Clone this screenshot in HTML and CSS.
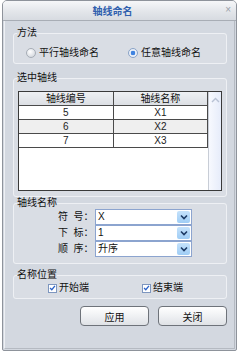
FILE: index.html
```html
<!DOCTYPE html>
<html lang="zh">
<head>
    <meta charset="UTF-8">
    <title>轴线命名</title>
    <link rel="stylesheet" href="styles.css">
</head>
<body>
    <div class="window">
        <div class="titlebar">
            <span class="title">轴线命名</span>
            <span class="close">×</span>
        </div>
        <div class="panel">
            <fieldset class="group group-method">
                <legend>方法</legend>
                <div class="radios">
                    <label class="radio"><span class="dot"></span>平行轴线命名</label>
                    <label class="radio checked"><span class="dot"></span>任意轴线命名</label>
                </div>
            </fieldset>

            <fieldset class="group group-list">
                <legend>选中轴线</legend>
                <div class="grid">
                    <div class="grid-body">
                        <table>
                            <thead>
                                <tr><th>轴线编号</th><th>轴线名称</th></tr>
                            </thead>
                            <tbody>
                                <tr><td>5</td><td>X1</td></tr>
                                <tr class="alt"><td>6</td><td>X2</td></tr>
                                <tr><td>7</td><td>X3</td></tr>
                            </tbody>
                        </table>
                    </div>
                    <div class="scrollbar">
                        <svg width="9" height="6" viewBox="0 0 9 6"><path d="M1 5 L4.5 1.5 L8 5" fill="none" stroke="#b8c2d4" stroke-width="1.4"/></svg>
                    </div>
                </div>
            </fieldset>

            <fieldset class="group group-name">
                <legend>轴线名称</legend>
                <div class="field">
                    <span class="field-label">符&nbsp;&nbsp;号：</span>
                    <div class="combo"><span>X</span><span class="combo-btn"><svg width="8" height="6" viewBox="0 0 8 6"><path d="M1 1.5 L4 4.5 L7 1.5" fill="none" stroke="#1d3a64" stroke-width="1.6"/></svg></span></div>
                </div>
                <div class="field">
                    <span class="field-label">下&nbsp;&nbsp;标：</span>
                    <div class="combo"><span>1</span><span class="combo-btn"><svg width="8" height="6" viewBox="0 0 8 6"><path d="M1 1.5 L4 4.5 L7 1.5" fill="none" stroke="#1d3a64" stroke-width="1.6"/></svg></span></div>
                </div>
                <div class="field">
                    <span class="field-label">顺&nbsp;&nbsp;序：</span>
                    <div class="combo"><span>升序</span><span class="combo-btn"><svg width="8" height="6" viewBox="0 0 8 6"><path d="M1 1.5 L4 4.5 L7 1.5" fill="none" stroke="#1d3a64" stroke-width="1.6"/></svg></span></div>
                </div>
            </fieldset>

            <fieldset class="group group-pos">
                <legend>名称位置</legend>
                <div class="checks">
                    <label class="check"><span class="box"><svg width="8" height="8" viewBox="0 0 8 8"><path d="M1.2 4 L3.2 6 L6.8 1.6" fill="none" stroke="#2b62c8" stroke-width="1.5"/></svg></span>开始端</label>
                    <label class="check"><span class="box"><svg width="8" height="8" viewBox="0 0 8 8"><path d="M1.2 4 L3.2 6 L6.8 1.6" fill="none" stroke="#2b62c8" stroke-width="1.5"/></svg></span>结束端</label>
                </div>
            </fieldset>

            <div class="buttons">
                <button class="btn">应用</button>
                <button class="btn">关闭</button>
            </div>
        </div>
    </div>
</body>
</html>
```

FILE: styles.css
```css
body {
    margin: 0;
    background: #ffffff;
    font-family: "Liberation Sans", "Noto Sans CJK SC", sans-serif;
    font-size: 10px;
    color: #111;
}
.window {
    margin: 0 4px 0 2px;
    height: 351px;
    box-sizing: border-box;
    border: 1px solid #8e939b;
    border-radius: 5px 5px 2px 2px;
    background: #d3d8e0;
    display: flex;
    flex-direction: column;
    overflow: hidden;
}
.titlebar {
    height: 19px;
    position: relative;
    display: flex;
    justify-content: center;
    align-items: center;
    background: linear-gradient(#f6f7f9, #e3e6ea 55%, #d7dbe1);
    border-bottom: 1px solid #a8adb5;
}
.title {
    color: #2f5fae;
    font-weight: bold;
    font-size: 10px;
    margin-right: 14px;
}
.close {
    position: absolute;
    right: 5px;
    top: 3px;
    color: #9aa0a8;
    font-size: 10px;
}
.panel {
    flex: 1;
    margin: 0 1px 1px 1px;
    border-left: 1px solid #eef0f4;
    border-right: 1px solid #b5bac2;
    border-bottom: 1px solid #b5bac2;
    padding: 6px 7px 0 8px;
    display: flex;
    flex-direction: column;
}
.group {
    margin: 0;
    padding: 0 4px 4px 4px;
    border: 1px solid #eef0f4;
    border-radius: 3px;
    background: #d9dde4;
}
.group legend {
    padding: 0;
    margin-left: -1px;
    line-height: 12px;
    font-size: 10px;
}
.group-method {
    padding-top: 8px;
    padding-bottom: 4px;
}
.radios {
    display: flex;
    padding-left: 8px;
    gap: 29px;
    line-height: 12px;
}
.radio {
    display: flex;
    align-items: center;
    gap: 3px;
}
.dot {
    width: 8px;
    height: 8px;
    border-radius: 50%;
    border: 1px solid #a7adb6;
    background: radial-gradient(circle at 40% 35%, #ffffff, #c9ced6);
}
.radio.checked .dot {
    border-color: #8aa3c7;
    background: radial-gradient(circle, #3f83e0 0, #3f83e0 2px, #e9eff8 2.6px);
}
.group-list {
    margin-top: 8px;
    padding-bottom: 5px;
}
.grid {
    display: flex;
    margin-top: 7px;
    height: 100px;
    box-sizing: border-box;
    border: 1px solid #3a3a3a;
    background: #fff;
}
.grid-body {
    flex: 1;
}
table {
    width: 100%;
    border-collapse: collapse;
}
th, td {
    padding: 0;
    text-align: center;
    font-weight: normal;
    line-height: 12px;
    border: 1px solid #4a4a4a;
    width: 50%;
}
th {
    height: 13px;
    background: linear-gradient(#eef0f3, #dcdfe4);
    border-top: none;
    border-left-color: #9aa0a8;
}
td {
    height: 13px;
    background: #fff;
    color: #222;
}
th:first-child, td:first-child {
    border-left: none;
}
tr.alt td {
    background: #efefef;
}
.scrollbar {
    width: 13px;
    border-left: 1px solid #c8cdd6;
    background: linear-gradient(90deg, #f7f9fe, #e6ecfa);
    display: flex;
    justify-content: center;
    padding-top: 5px;
    box-sizing: border-box;
}
.group-name {
    margin-top: 0;
    padding-top: 0;
    padding-bottom: 6px;
}
.field {
    display: flex;
    align-items: center;
    height: 16px;
    padding-left: 40px;
}
.field-label {
    width: 37px;
    line-height: 12px;
}
.combo {
    width: 97px;
    height: 16px;
    box-sizing: border-box;
    border: 1px solid #8ca4cf;
    background: #fff;
    display: flex;
    align-items: center;
    justify-content: space-between;
    padding-left: 2px;
    line-height: 12px;
}
.combo-btn {
    width: 13px;
    height: 12px;
    margin-right: 1px;
    border-radius: 2px;
    background: linear-gradient(#c5e2fb, #9fcdf5);
    display: flex;
    align-items: center;
    justify-content: center;
}
.group-pos {
    margin-top: 5px;
    padding-top: 1px;
    padding-bottom: 4px;
}
.checks {
    display: flex;
    padding-left: 30px;
    gap: 53px;
    line-height: 12px;
}
.check {
    display: flex;
    align-items: center;
    gap: 2px;
}
.box {
    width: 9px;
    height: 9px;
    box-sizing: border-box;
    border: 1px solid #7d96bf;
    background: #fff;
    display: flex;
    align-items: center;
    justify-content: center;
}
.buttons {
    display: flex;
    justify-content: flex-end;
    gap: 9px;
    margin-top: 7px;
}
.btn {
    width: 69px;
    height: 20px;
    border: 1px solid #6e737a;
    border-radius: 4px;
    background: linear-gradient(#ffffff, #eceef1 60%, #dfe2e6);
    font-family: inherit;
    font-size: 10px;
    color: #111;
    padding: 0;
}
```
